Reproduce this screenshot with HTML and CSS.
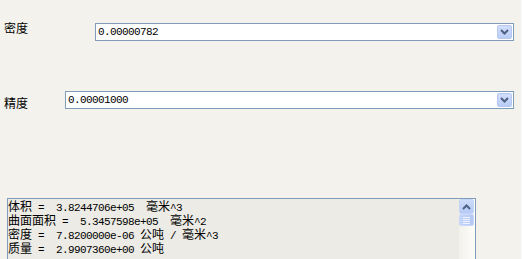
FILE: index.html
```html
<!DOCTYPE html>
<html lang="zh">
<head>
  <meta charset="UTF-8" />
  <title>质量属性</title>
  <link rel="stylesheet" href="styles.css">
</head>
<body>
  <!-- 密度 -->
  <div class="row row-density">
    <span class="label">密度</span>
    <div class="combo">
      <span class="combo-value">0.00000782</span>
      <span class="combo-btn">
        <svg width="9" height="6" viewBox="0 0 9 6"><path d="M1 1 L4.5 4.5 L8 1" fill="none" stroke="#4d6185" stroke-width="2"/></svg>
      </span>
    </div>
  </div>

  <!-- 精度 -->
  <div class="row row-precision">
    <span class="label">精度</span>
    <div class="combo">
      <span class="combo-value">0.00001000</span>
      <span class="combo-btn">
        <svg width="9" height="6" viewBox="0 0 9 6"><path d="M1 1 L4.5 4.5 L8 1" fill="none" stroke="#4d6185" stroke-width="2"/></svg>
      </span>
    </div>
  </div>

  <!-- 结果 -->
  <div class="results">
    <div class="results-text"><span class="zh">体积</span> =  3.8244706e+05  <span class="zh">毫米</span>^3
<span class="zh">曲面面积</span> =  5.3457598e+05  <span class="zh">毫米</span>^2
<span class="zh">密度</span> =  7.8200000e-06 <span class="zh">公吨</span> / <span class="zh">毫米</span>^3
<span class="zh">质量</span> =  2.9907360e+00 <span class="zh">公吨</span></div>
    <div class="scrollbar">
      <span class="scroll-up">
        <svg width="9" height="6" viewBox="0 0 9 6"><path d="M1 5 L4.5 1.5 L8 5" fill="none" stroke="#4d6185" stroke-width="2"/></svg>
      </span>
      <span class="scroll-thumb">
        <i></i><i></i><i></i><i></i>
      </span>
    </div>
  </div>
</body>
</html>
```

FILE: styles.css
```css
body {
  margin: 0;
  background: #f3f2ed;
  font-family: "Noto Sans CJK SC", sans-serif;
  font-size: 12px;
  color: #000000;
  height: 259px;
  overflow: hidden;
  border-right: 1px solid #fcfcfa;
}

.row {
  display: flex;
  align-items: flex-start;
  padding-right: 7px;
}

.label {
  flex: none;
  padding-left: 4px;
  line-height: 12px;
}

.row-density {
  margin-top: 23px;
}

.row-density .label {
  width: 91px;
  margin-top: -1px;
}

.row-precision {
  margin-top: 50px;
}

.row-precision .label {
  width: 61px;
  margin-top: 6px;
}

.combo {
  flex: 1;
  display: flex;
  align-items: center;
  justify-content: space-between;
  height: 16px;
  border: 1px solid #7f9db9;
  background: #ffffff;
}

.combo-value {
  padding-left: 2px;
  font-family: "Liberation Mono", monospace;
  font-size: 11px;
  letter-spacing: -0.6px;
  line-height: 16px;
  color: #000000;
}

.combo-btn {
  display: flex;
  align-items: center;
  justify-content: center;
  width: 15px;
  height: 14px;
  margin-right: 1px;
  background: linear-gradient(#d2defb, #b9cdf7);
  border: 1px solid #b6c8f2;
  box-sizing: border-box;
  border-radius: 2px;
}

.results {
  display: flex;
  margin: 89px 0 0 7px;
  width: 467px;
  height: 60px;
  border: 1px solid #7f9db9;
  border-bottom: none;
  background: #ecebe5;
}

.results-text {
  flex: 1;
  white-space: pre;
  font-family: "Liberation Mono", "Noto Sans CJK SC", monospace;
  font-size: 11px;
  letter-spacing: -0.6px;
  line-height: 12px;
  padding-top: 1px;
  color: #000000;
}

.results-text .zh {
  font-family: "Noto Sans CJK SC", sans-serif;
  font-size: 12px;
  line-height: 12px;
  letter-spacing: 0;
}

.scrollbar {
  display: flex;
  flex-direction: column;
  width: 16px;
  background: linear-gradient(90deg, #f3f1ec, #fdfdfa);
}

.scroll-up {
  display: flex;
  align-items: center;
  justify-content: center;
  height: 15px;
  width: 15px;
  background: linear-gradient(#cddbfb, #b7cbf6);
  border: 1px solid #c5d5f8;
  box-sizing: border-box;
  border-radius: 2px;
}

.scroll-thumb {
  display: flex;
  flex-direction: column;
  align-items: center;
  justify-content: center;
  gap: 1px;
  width: 15px;
  height: 12px;
  background: linear-gradient(90deg, #c6d6fa, #b4c8f4);
  border: 1px solid #c9d8f8;
  box-sizing: border-box;
  border-radius: 2px;
}

.scroll-thumb i {
  display: block;
  width: 7px;
  height: 1px;
  background: #eef3fe;
}
```
